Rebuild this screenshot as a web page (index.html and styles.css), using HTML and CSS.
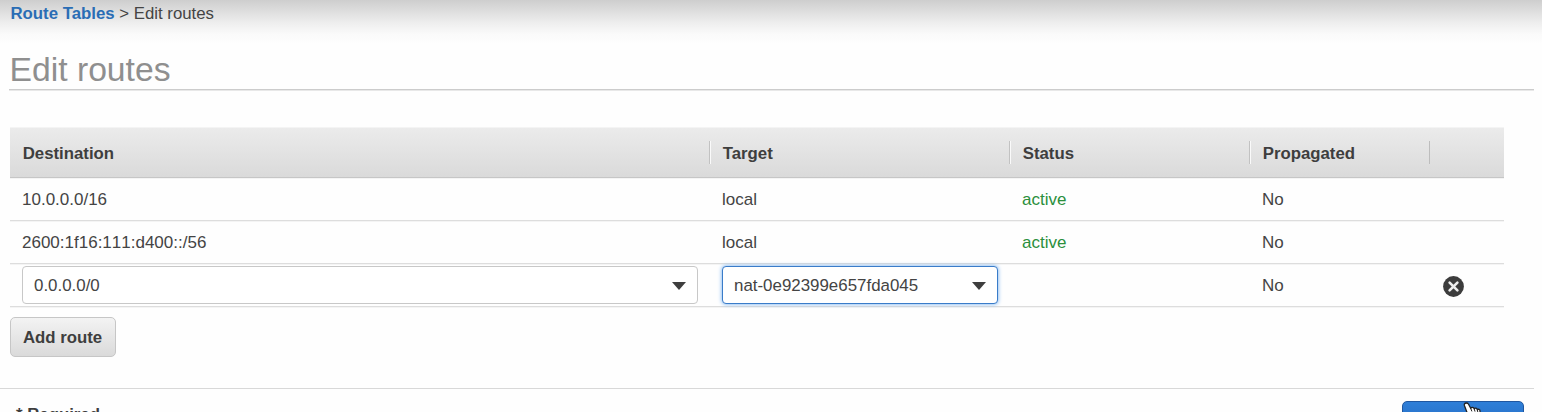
FILE: index.html
```html
<!DOCTYPE html>
<html lang="en">
<head>
<meta charset="utf-8">
<title>Edit routes</title>
<link rel="stylesheet" href="styles.css">
</head>
<body>
<main class="page">
  <nav class="breadcrumb"><a class="crumb-link">Route Tables</a> &gt; <span>Edit routes</span></nav>
  <h1 class="title">Edit routes</h1>
  <section class="routes">
    <div class="row head">
      <div class="th">Destination</div>
      <div class="th">Target</div>
      <div class="th">Status</div>
      <div class="th">Propagated</div>
      <div class="th"></div>
    </div>
    <div class="row">
      <div class="td">10.0.0.0/16</div>
      <div class="td">local</div>
      <div class="td active">active</div>
      <div class="td">No</div>
      <div class="td"></div>
    </div>
    <div class="row">
      <div class="td">2600:1f16:111:d400::/56</div>
      <div class="td">local</div>
      <div class="td active">active</div>
      <div class="td">No</div>
      <div class="td"></div>
    </div>
    <div class="row">
      <div class="td control">
        <div class="combo"><span>0.0.0.0/0</span><svg class="caret" viewBox="0 0 14 8"><path d="M0 0H14L7 8Z"/></svg></div>
      </div>
      <div class="td control">
        <div class="combo focused"><span>nat-0e92399e657fda045</span><svg class="caret" viewBox="0 0 14 8"><path d="M0 0H14L7 8Z"/></svg></div>
      </div>
      <div class="td"></div>
      <div class="td">No</div>
      <div class="td control">
        <svg class="remove" viewBox="0 0 21 21"><circle cx="10.5" cy="10.5" r="10.4" fill="#3c3c3c"/><path d="M6.6 6.6L14.4 14.4M14.4 6.6L6.6 14.4" stroke="#ededed" stroke-width="2.6" stroke-linecap="round"/></svg>
      </div>
    </div>
  </section>
  <button class="add">Add route</button>
</main>
<footer class="footer">
  <div class="required">* Required</div>
  <div class="save">
    <svg class="pointer" viewBox="0 0 18 20"><path d="M3.2 1C1.5 1 1 2.3 1.5 3.8L4.6 12L2.5 11C.8 10.6.3 12 1.5 13.2L7 19H16L17 13V9C17 7.3 15.3 6.8 14.3 7.8C14 6 12.2 5.7 11.2 6.8C10.6 5.2 8.6 5 7.7 6.3L5.4 2C5 1.2 4.2 1 3.2 1Z" fill="#fff" stroke="#222" stroke-width="1.3" stroke-linejoin="round"/><path d="M7.7 6.3L8.9 9.4M11.2 6.8L12 9.6M14.3 7.8L14.8 10" fill="none" stroke="#222" stroke-width="1"/></svg>
  </div>
</footer>
</body>
</html>
```

FILE: styles.css
```css
* {
  box-sizing: border-box;
}

body {
  margin: 0;
  height: 412px;
  overflow: hidden;
  background: #fefefe linear-gradient(#cecece 0, #dcdcdc 10px, #eeeeee 23px, #fafafa 34px, #fefefe 44px) no-repeat;
  color: #444;
  font: 16.8px/20px "Liberation Sans", Arial, sans-serif;
}

.page {
  height: 388px;
  padding: 4px 8px 0 10px;
}

.breadcrumb {
  height: 19px;
  padding-left: 0.5px;
}

.crumb-link {
  color: #2a6db5;
  font-weight: bold;
}

.title {
  height: 67px;
  margin: 0 0 37px -1px;
  padding: 26px 0 0 0.5px;
  border-bottom: 1px solid #ccc;
  box-shadow: 0 1px #e8e8e8;
  color: #8f8f8f;
  font-size: 33.7px;
  font-weight: normal;
  line-height: 40px;
}

.routes {
  width: 1494px;
}

.row {
  display: grid;
  grid-template-columns: 700px 300px 240px 180px 74px;
  align-items: center;
  height: 43px;
  border-bottom: 1px solid #ddd;
  box-shadow: 0 1px #f4f4f4;
}

.head {
  height: 51px;
  border-top: 1px solid #f4f4f4;
  border-bottom-color: #c6c6c6;
  background: linear-gradient(#ebebeb, #dadada);
  color: #3e3e3e;
  font-weight: bold;
}

.th {
  height: 23px;
  padding-left: 12.7px;
  border-right: 1px solid #c2c2c2;
  line-height: 25px;
  box-shadow: 1px 0 #fafafa;
}

.th:nth-child(4) {
  border-right-color: #bdbdbd;
  box-shadow: none;
}

.th:last-child {
  border: 0;
  box-shadow: none;
}

.td {
  padding: 1px 12px 0;
  font-size: 17px;
  font-kerning: none;
}

.control {
  padding-top: 0;
}

.active {
  color: #2b8f3c;
}

.combo {
  display: flex;
  align-items: center;
  justify-content: space-between;
  height: 38px;
  padding: 1px 11px 0;
  border: 1px solid #c8c8c8;
  border-radius: 4px;
  background: #fff;
  font-size: 16.9px;
}

.focused {
  border-color: #3a7cc9;
  box-shadow: 0 0 4px #67a9ee;
}

.caret {
  width: 14px;
  height: 8px;
  fill: #3e3e3e;
}

.remove {
  display: block;
  width: 21px;
  height: 21px;
  margin: 2px 0 0 1px;
}

.add {
  display: block;
  width: 106px;
  height: 40px;
  margin-top: 10px;
  padding: 2px 1px 0 0;
  border: 1px solid #c6c6c6;
  border-radius: 5px;
  background: linear-gradient(#f3f3f3, #dadada);
  color: #3e3e3e;
  font: bold 16.8px/20px "Liberation Sans", Arial, sans-serif;
}

.footer {
  display: flex;
  justify-content: space-between;
  width: 1534px;
  height: 24px;
  padding: 12px 10px 0 16px;
  border-top: 1px solid #d8d8d8;
}

.required {
  padding-top: 4px;
  color: #3e3e3e;
  font-weight: bold;
}

.save {
  width: 122px;
  height: 40px;
  padding-left: 60px;
  border: 1px solid #2057a0;
  border-radius: 5px;
  background: linear-gradient(#2f7fd8, #1f63b8);
}

.pointer {
  display: block;
  width: 18px;
  height: 20px;
}
```
